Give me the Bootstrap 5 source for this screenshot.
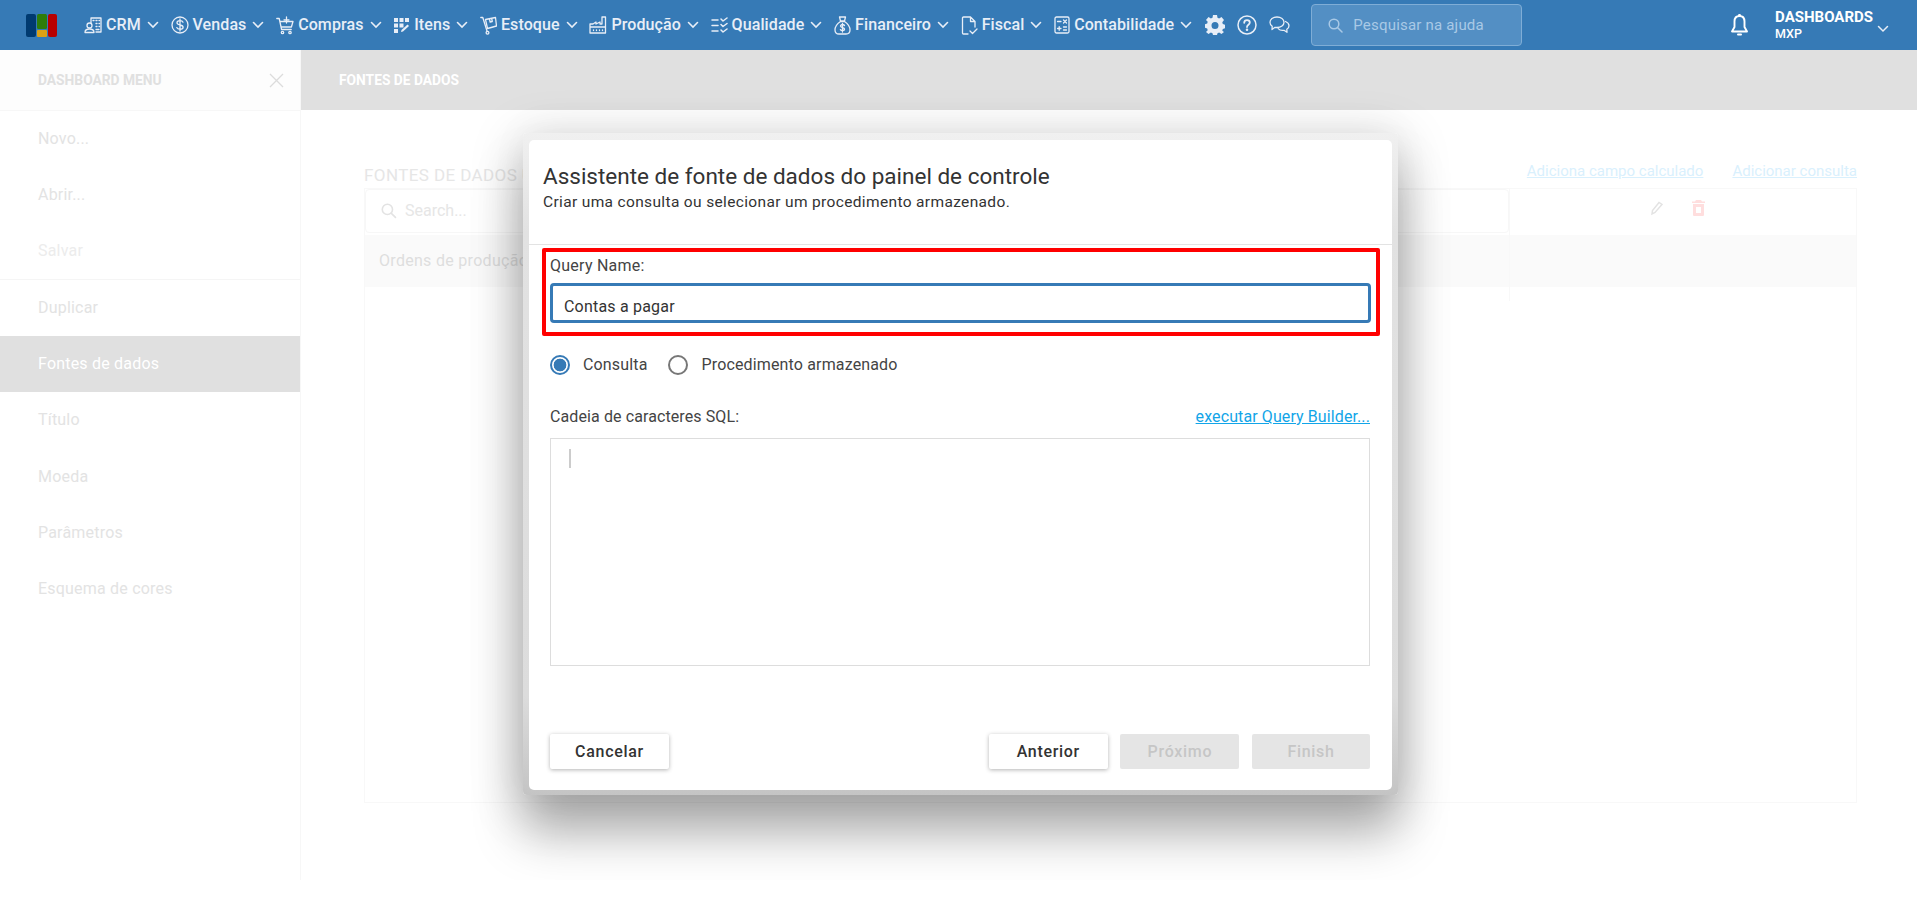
<!DOCTYPE html>
<html lang="pt">
<head>
<meta charset="utf-8">
<title>Assistente de fonte de dados</title>
<link href="https://cdn.jsdelivr.net/npm/bootstrap@5.3.0/dist/css/bootstrap.min.css" rel="stylesheet">
<style>
html,body{height:897px;overflow:hidden;background:#fff}
body{font-family:Roboto,"Liberation Sans",sans-serif;font-size:16px;color:#333}
.topbar{height:50px;background:#367ab6;color:#e8eef7;padding-left:25px}
.brand{width:32px;height:23px;margin-right:27px;flex:none}
.menu{gap:11.700px;font-weight:500;font-size:16px;letter-spacing:.1px}
.menu-item{gap:4px;white-space:nowrap}
.menu-item svg,.tool svg{display:block}
.chev{margin-left:2px}
.ic{fill:none;stroke:#e8eef7;stroke-width:1.3;stroke-linecap:round;stroke-linejoin:round}
.tools{gap:12px;margin-left:13px}
.help-search{width:211px;height:42px;margin-left:21px;background:#538fc4;border:1px solid #7fadd6;border-radius:4px;padding-left:16px;gap:10px;color:#a9c9e6;font-size:15px;letter-spacing:.2px}
.user-box{margin-left:auto;padding-right:28px}
.bell-ic{margin-right:26px}
.user-name{font-size:15px;font-weight:700;line-height:17px;color:#fff}
.user-org{font-size:12.500px;font-weight:500;line-height:15px;color:#fff}
.stage{height:830px;overflow:hidden;position:relative}
.side{width:301px;border-right:1px solid #f7f7f7;flex:none;height:100%}
.side-head{height:61px;background:#fdfdfd;border-bottom:1px solid #f7f7f7;padding:0 16px 0 38px;color:#e0e0e0;font-size:13.800px;font-weight:700}
.side-link{height:56.250px;padding-left:38px;color:#e3e3e3;font-size:16px;letter-spacing:.2px}
.side-link.faint{color:#ececec}
.side-link.rule{border-bottom:1px solid #f5f5f5}
.side-link.on{background:#e0e0e0;color:#fff}
.main-head{height:60px;background:#e0e0e0;color:#fff;font-size:13.800px;font-weight:700;padding-left:38px}
.main-body{padding:52px 60px 0 63px}
.ds-head{height:25px}
.ds-title{color:#e6e6e6;font-size:17px;letter-spacing:.4px;line-height:24px;white-space:nowrap}
.ds-links{gap:29px;margin-bottom:6px}
.ds-link{color:#d9f0fd;text-decoration:underline;font-size:15px}
.ds-frame{border:1px solid #f8f8f8;height:615px;margin-top:1px}
.ds-search{height:44px;width:1144px;border:1px solid #f7f7f7;border-radius:4px;padding-left:15px;gap:8px;color:#e6e6e6;font-size:16px}
.ds-actions{position:absolute;left:1144px;top:0;width:1px;height:112px;background:#f8f8f8}
.ds-row{height:52px;background:#fafafa;padding-left:14px;color:#dedede;font-size:16px;letter-spacing:.3px;margin-top:2px}
.ds-tool{position:absolute;top:11px;display:block}
.wizard{position:absolute;left:523px;top:83px;width:875px;height:662px;padding:7px 6px 5px;background:linear-gradient(#f0f0f0,#e2e2e2 15%,#dcdcdc 85%,#c4c4c4);border-radius:4px;box-shadow:0 40px 50px rgba(0,0,0,.27),0 10px 50px 6px rgba(0,0,0,.15),0 -5px 40px rgba(0,0,0,.04)}
.wizard-card{height:100%;background:#fff;border-radius:5px}
.wizard-head{height:105px;border-bottom:1px solid #e3e3e3;padding:21px 14px 0}
.wizard-title{font-size:22.500px;line-height:30px;font-weight:400;color:#333;margin:0}
.wizard-sub{font-size:15.500px;line-height:19px;color:#333;letter-spacing:.35px;margin:2px 0 0}
.mark-box{margin:3px 12px 0 13px;height:88px;border:4px solid #f00;border-radius:2px;padding:4px 5px 0 4px}
.q-label{font-size:16px;line-height:20px;letter-spacing:.25px;color:#444;margin:0 0 7px}
.q-input.form-control{height:40px;border:3px solid #367ab6;border-radius:4px;padding:7px 11px 0;font-size:16px;letter-spacing:.2px;color:#333;box-shadow:none}
.radios{margin:18px 22px 0 21px;height:22px;font-size:16px;letter-spacing:.15px;color:#444}
.radios .form-check-input{width:20px;height:20px;margin:0;flex:none;border:2px solid #777;background-image:none}
.radios .form-check-input:checked{border-color:#367ab6;background-color:#fff;background-image:radial-gradient(circle,#367ab6 0 6px,#fff 6.700px)}
.radio-txt{margin-left:13px}
.radios .radio-next.form-check-input{margin-left:21px}
.sql-line{margin:29px 22px 0 21px;height:24px;font-size:16px;letter-spacing:.1px;color:#444}
.sql-line a{color:#12a5e8;letter-spacing:.1px}
.sql-area{margin:9px 22px 0 21px;height:228px;border:1px solid #ddd;padding:10px 18px}
.caret-bar{display:block;width:2px;height:19px;background:#ccc}
.wizard-foot{margin:auto 22px 21px 21px;gap:12.600px}
.wbtn.btn{width:119px;height:35px;padding:0;border:0;border-radius:2px;background:#fff;color:#333;font-size:16px;font-weight:500;letter-spacing:.7px;box-shadow:0 1px 4px rgba(0,0,0,.3)}
.wbtn.btn:disabled{background:#e5e5e5;color:#c6c6c6;box-shadow:none;opacity:1}
.wbtn.btn.wbtn-end{width:118px}
</style>
</head>
<body>
<nav class="topbar d-flex align-items-center">
  <svg class="brand" viewBox="0 0 32 23"><rect x="1" width="10" height="23" rx="2" fill="#003a70"/><rect x="12" width="10" height="15" rx="1.500" fill="#2e7d0a"/><rect x="12" y="16" width="10" height="7" rx="1" fill="#dca014"/><rect x="23" width="9" height="23" rx="2" fill="#b80000"/></svg>
  <div class="menu d-flex align-items-center">
    <div class="menu-item d-flex align-items-center"><svg width="18" height="18" viewBox="0 0 18 18" class="ic"><path d="M7 7V2h10v14h-5M9 4.500h1M12 4.500h1M15 4.500h.5M12 7.500h1M15 7.500h.5M12 10.500h1M15 10.500h.5M12 13.500h3"/><circle cx="5.500" cy="9.500" r="2.500"/><path d="M1 16.500c0-3 2-3.500 4.500-3.500S10 13.500 10 16.500z"/></svg><span>CRM</span><svg class="chev" width="12" height="8" viewBox="0 0 12 8"><path d="M1.500 1.500 6 6l4.500-4.500" fill="none" stroke="#e8eef7" stroke-width="1.600" stroke-linecap="round"/></svg></div>
    <div class="menu-item d-flex align-items-center"><svg width="18" height="18" viewBox="0 0 18 18" class="ic"><circle cx="9" cy="9" r="8"/><path d="M12 6.200C11.500 5 10.300 4.700 9 4.700c-1.700 0-3 .8-3 2.100 0 3 6.100 1.400 6.100 4.400 0 1.300-1.400 2.100-3.100 2.100-1.400 0-2.700-.5-3.200-1.700M9 3v12"/></svg><span>Vendas</span><svg class="chev" width="12" height="8" viewBox="0 0 12 8"><path d="M1.500 1.500 6 6l4.500-4.500" fill="none" stroke="#e8eef7" stroke-width="1.600" stroke-linecap="round"/></svg></div>
    <div class="menu-item d-flex align-items-center"><svg width="18" height="19" viewBox="0 0 18 19" class="ic"><path d="M.8 2.500h2.400l2.400 11h9.600M4 5.500h13l-1.600 5.500H5M10.500 1v6M8 3.800h5"/><circle cx="6.500" cy="16.500" r="1.200"/><circle cx="14" cy="16.500" r="1.200"/></svg><span>Compras</span><svg class="chev" width="12" height="8" viewBox="0 0 12 8"><path d="M1.500 1.500 6 6l4.500-4.500" fill="none" stroke="#e8eef7" stroke-width="1.600" stroke-linecap="round"/></svg></div>
    <div class="menu-item d-flex align-items-center"><svg width="17" height="17" viewBox="0 0 17 17"><g fill="#e8eef7"><rect x="1" y="1" width="4" height="4"/><rect x="6.500" y="1" width="4" height="4"/><rect x="12" y="1" width="4" height="4"/><rect x="1" y="6.500" width="4" height="4"/><rect x="6.500" y="6.500" width="4" height="4"/><rect x="1" y="12" width="4" height="4"/></g><path d="M8 15l.5-2 6-5.500 1.500 1.500-6 5.500z" fill="#e8eef7"/></svg><span>Itens</span><svg class="chev" width="12" height="8" viewBox="0 0 12 8"><path d="M1.500 1.500 6 6l4.500-4.500" fill="none" stroke="#e8eef7" stroke-width="1.600" stroke-linecap="round"/></svg></div>
    <div class="menu-item d-flex align-items-center"><svg width="17" height="19" viewBox="0 0 17 19" class="ic"><path d="M.8 1.500h2L7 15"/><circle cx="7.500" cy="16.800" r="1.400"/><path d="M5.500 3.500 15.500 1.500 16.500 10 7.500 12.500zM9.500 3l.6 3 2.200-.5-.6-3"/></svg><span>Estoque</span><svg class="chev" width="12" height="8" viewBox="0 0 12 8"><path d="M1.500 1.500 6 6l4.500-4.500" fill="none" stroke="#e8eef7" stroke-width="1.600" stroke-linecap="round"/></svg></div>
    <div class="menu-item d-flex align-items-center"><svg width="18" height="18" viewBox="0 0 18 18" class="ic"><path d="M1 17V8h3l3-2v2l4-2v2h2V1h3.500v16zM1 11h15.500M4.500 14v.500M7.500 14v.500M10.500 14v.500M13.500 14v.500"/></svg><span>Produção</span><svg class="chev" width="12" height="8" viewBox="0 0 12 8"><path d="M1.500 1.500 6 6l4.500-4.500" fill="none" stroke="#e8eef7" stroke-width="1.600" stroke-linecap="round"/></svg></div>
    <div class="menu-item d-flex align-items-center"><svg width="17" height="17" viewBox="0 0 17 17" class="ic"><path d="M1 3h6M1 8.500h6M1 14h6M10 2l2 2 4-3M10 7.500l2 2 4-3M10 13l2 2 4-3" stroke-width="1.500"/></svg><span>Qualidade</span><svg class="chev" width="12" height="8" viewBox="0 0 12 8"><path d="M1.500 1.500 6 6l4.500-4.500" fill="none" stroke="#e8eef7" stroke-width="1.600" stroke-linecap="round"/></svg></div>
    <div class="menu-item d-flex align-items-center"><svg width="17" height="19" viewBox="0 0 17 19" class="ic"><path d="M5.500 1h6L10.500 5h-4zM6.500 5.500h4c3 2 5.500 5 5.500 8.500 0 2.500-1.500 4-4 4H5c-2.500 0-4-1.500-4-4 0-3.500 2.500-6.500 5.500-8.500zM10.500 9.500C10 8.800 9.300 8.500 8.500 8.500c-1.100 0-2 .6-2 1.600 0 2 4 1 4 3 0 1-1 1.600-2 1.600-.9 0-1.700-.4-2.100-1.100M8.500 7.500v8.500"/></svg><span>Financeiro</span><svg class="chev" width="12" height="8" viewBox="0 0 12 8"><path d="M1.500 1.500 6 6l4.500-4.500" fill="none" stroke="#e8eef7" stroke-width="1.600" stroke-linecap="round"/></svg></div>
    <div class="menu-item d-flex align-items-center"><svg width="17" height="19" viewBox="0 0 17 19" class="ic"><path d="M7 18H2.500a1 1 0 0 1-1-1V2a1 1 0 0 1 1-1h7L14 5.500V11M9.500 1v4.500H14M9 15l2.500 2.500L16 13"/></svg><span>Fiscal</span><svg class="chev" width="12" height="8" viewBox="0 0 12 8"><path d="M1.500 1.500 6 6l4.500-4.500" fill="none" stroke="#e8eef7" stroke-width="1.600" stroke-linecap="round"/></svg></div>
    <div class="menu-item d-flex align-items-center"><svg width="16" height="18" viewBox="0 0 16 18" class="ic"><rect x="1" y="1" width="14" height="16" rx="1.500"/><path d="M3.500 5.500h3.500M9.500 4l3 3M12.500 4l-3 3M3.500 12.500h3.500M5.200 10.700v3.600M9.500 11h3M9.500 14h3"/></svg><span>Contabilidade</span><svg class="chev" width="12" height="8" viewBox="0 0 12 8"><path d="M1.500 1.500 6 6l4.500-4.500" fill="none" stroke="#e8eef7" stroke-width="1.600" stroke-linecap="round"/></svg></div>
  </div>
  <div class="tools d-flex align-items-center">
    <svg width="20" height="20" viewBox="0 0 20 20"><path fill="#e8eef7" fill-rule="evenodd" d="M8 0h4l.5 2.800 1.600.7L16.500 2 19 5l-1.700 2.300.5 1.700 2.200.7v3.600l-2.200.7-.5 1.700L19 17l-2.500 2-2.400-1.500-1.600.7L12 20H8l-.5-1.800-1.600-.7L3.500 19 1 17l1.700-1.800-.5-1.700-2.200-.7V9.200l2.200-.7.5-1.700L1 5l2.500-3 2.400 1.500 1.600-.7zM10 7a3.500 3.500 0 1 0 0 7 3.500 3.500 0 0 0 0-7z"/></svg>
    <svg width="20" height="20" viewBox="0 0 20 20" class="ic"><circle cx="10" cy="10" r="9" stroke-width="1.500"/><path d="M7.200 7.800C7.300 6 8.500 5.200 10 5.200c1.600 0 2.800 1 2.800 2.400 0 2.200-2.800 2.200-2.800 4.400" stroke-width="1.800"/><circle cx="10" cy="14.800" r=".6" stroke-width="1.400"/></svg>
    <svg width="21" height="18" viewBox="0 0 21 18" class="ic"><path d="M8 1c4 0 7 2.200 7 5.200s-3 5.300-7 5.300c-.7 0-1.300 0-2-.2L3 13.500l.2-3.200C1.800 9.300 1 7.900 1 6.200 1 3.200 4 1 8 1z"/><path d="M16.500 5.500c2 .8 3.500 2.400 3.500 4.300 0 1.500-.8 2.700-2.200 3.500l.2 3-3-2c-2.300.4-4.500-.2-5.800-1.700"/></svg>
  </div>
  <div class="help-search d-flex align-items-center"><svg width="15" height="15" viewBox="0 0 15 15" fill="none" stroke="#a9c9e6" stroke-width="1.500"><circle cx="6" cy="6" r="4.800"/><path d="M9.500 9.500 14 14" stroke-linecap="round"/></svg><span>Pesquisar na ajuda</span></div>
  <div class="user-box d-flex align-items-center">
    <svg class="bell-ic" width="19" height="23" viewBox="0 0 19 23" fill="none" stroke="#fff" stroke-width="1.900" stroke-linejoin="round"><path d="M9.500 2C6 2 4.500 4.500 4.500 7.500V13L2 17.500h15L14.500 13V7.500C14.500 4.500 13 2 9.500 2z"/><path d="M8 20.500h3" stroke-linecap="round" stroke-width="2"/><circle cx="9.500" cy="1.500" r=".6"/></svg>
    <div class="d-flex flex-column"><span class="user-name">DASHBOARDS</span><span class="user-org">MXP</span></div>
    <svg class="ms-1 mt-2" width="12" height="8" viewBox="0 0 12 8"><path d="M1.500 1.500 6 6l4.500-4.500" fill="none" stroke="#e8eef7" stroke-width="1.500" stroke-linecap="round"/></svg>
  </div>
</nav>
<div class="stage d-flex">
  <aside class="side">
    <div class="side-head d-flex align-items-center justify-content-between"><span>DASHBOARD MENU</span><svg width="15" height="15" viewBox="0 0 15 15" stroke="#dcdcdc" stroke-width="1.300"><path d="M1 1l13 13M14 1 1 14"/></svg></div>
    <div class="side-link d-flex align-items-center">Novo...</div>
    <div class="side-link d-flex align-items-center">Abrir...</div>
    <div class="side-link faint rule d-flex align-items-center">Salvar</div>
    <div class="side-link d-flex align-items-center">Duplicar</div>
    <div class="side-link on d-flex align-items-center">Fontes de dados</div>
    <div class="side-link d-flex align-items-center">Título</div>
    <div class="side-link d-flex align-items-center">Moeda</div>
    <div class="side-link d-flex align-items-center">Parâmetros</div>
    <div class="side-link d-flex align-items-center">Esquema de cores</div>
  </aside>
  <main class="flex-grow-1">
    <div class="main-head d-flex align-items-center">FONTES DE DADOS</div>
    <div class="main-body">
      <div class="ds-head d-flex align-items-center justify-content-between">
        <span class="ds-title">FONTES DE DADOS UT</span>
        <span class="d-flex ds-links"><a class="ds-link" href="#">Adiciona campo calculado</a><a class="ds-link" href="#">Adicionar consulta</a></span>
      </div>
      <div class="ds-frame position-relative">
        <div class="ds-search d-flex align-items-center"><svg width="16" height="16" viewBox="0 0 15 15" fill="none" stroke="#e3e3e3" stroke-width="1.500"><circle cx="6" cy="6" r="4.800"/><path d="M9.500 9.500 14 14"/></svg><span>Search...</span></div>
        <div class="ds-row d-flex align-items-center">Ordens de produção</div>
        <div class="ds-actions"></div>
        <svg class="ds-tool" style="left:1285px" width="14" height="16" viewBox="0 0 14 16" fill="none" stroke="#e3e3e3" stroke-width="1.500"><path d="M2 14l.5-3.500L9 2.500l3 2L5 12.500z"/></svg>
        <svg class="ds-tool" style="left:1327px" width="13" height="16" viewBox="0 0 13 16"><path fill="#ffdede" d="M4 0h5l1 1.500h3V3H0V1.500h3zM1 4h11v11a1 1 0 0 1-1 1H2a1 1 0 0 1-1-1zm3 3v6h5V7z"/></svg>
      </div>
    </div>
  </main>
  <div class="wizard">
    <div class="wizard-card d-flex flex-column">
      <div class="wizard-head">
        <h1 class="wizard-title">Assistente de fonte de dados do painel de controle</h1>
        <p class="wizard-sub">Criar uma consulta ou selecionar um procedimento armazenado.</p>
      </div>
      <div class="mark-box">
        <label class="q-label d-block">Query Name:</label>
        <input class="form-control q-input" type="text" value="Contas a pagar">
      </div>
      <div class="radios d-flex align-items-center">
        <input class="form-check-input" type="radio" name="qk" checked><span class="radio-txt">Consulta</span>
        <input class="form-check-input radio-next" type="radio" name="qk"><span class="radio-txt">Procedimento armazenado</span>
      </div>
      <div class="sql-line d-flex justify-content-between align-items-center"><span>Cadeia de caracteres SQL:</span><a href="#">executar Query Builder...</a></div>
      <div class="sql-area"><span class="caret-bar"></span></div>
      <div class="wizard-foot d-flex">
        <button class="btn wbtn me-auto" type="button">Cancelar</button>
        <button class="btn wbtn" type="button">Anterior</button>
        <button class="btn wbtn" type="button" disabled>Próximo</button>
        <button class="btn wbtn wbtn-end" type="button" disabled>Finish</button>
      </div>
    </div>
  </div>
</div>
<script src="https://cdn.jsdelivr.net/npm/bootstrap@5.3.0/dist/js/bootstrap.bundle.min.js"></script>
</body>
</html>
